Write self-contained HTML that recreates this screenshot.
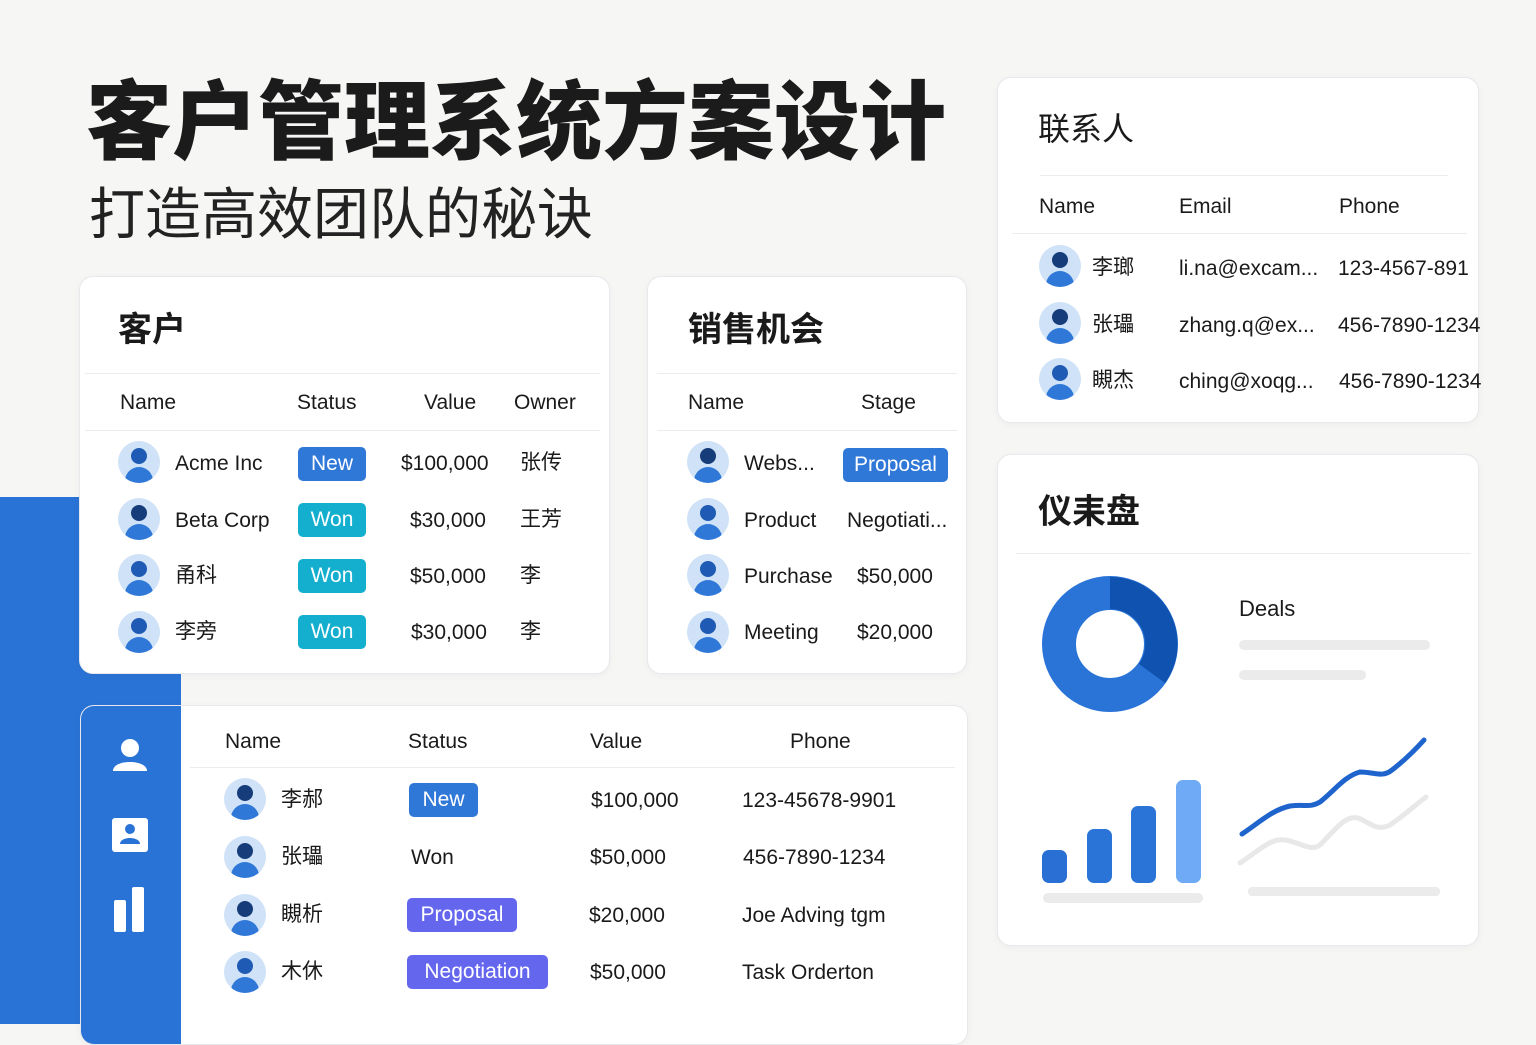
<!DOCTYPE html>
<html><head><meta charset="utf-8"><style>
*{margin:0;padding:0;box-sizing:border-box}
body{width:1536px;height:1024px;background:#f6f6f5;position:relative;overflow:hidden;font-family:"Liberation Sans","Noto Sans CJK SC",sans-serif;color:#1a1a1a}
.a{position:absolute;white-space:nowrap}
.card{position:absolute;background:#fff;border:1px solid #e6e8ec;border-radius:14px;box-shadow:0 2px 8px rgba(0,0,0,.04)}
.hl{position:absolute;height:1px;background:#ececec}
.t{font-size:21px}
.cj{transform:translateY(-6px)}
.h{font-size:34px;font-weight:bold;transform:translateY(-6px)}
.b{position:absolute;color:#fff;font-size:21px;border-radius:5px;text-align:center;line-height:34px;height:34px}
.new{background:#2f78d8}.won{background:#14aece}.pur{background:#6566ee}
.av{position:absolute;width:42px;height:42px;border-radius:50%;background:#cfe2f8;overflow:hidden}
.av:before{content:"";position:absolute;left:13px;top:7px;width:16px;height:16px;border-radius:50%;background:#1f5bb5}
.av:after{content:"";position:absolute;left:7px;top:26px;width:28px;height:18px;border-radius:14px 14px 0 0;background:#2f78d8}
.dk:before{background:#173c7a}
</style></head><body>
<div class="a" style="left:0;top:497px;width:181px;height:527px;background:#2a73d6"></div>

<div class="a" style="left:86px;top:52px;font-size:86px;font-weight:900;color:#1b1b1b">客户管理系统方案设计</div>
<div class="a" style="left:89px;top:170px;font-size:56px;color:#222">打造高效团队的秘诀</div>

<!-- customers -->
<div class="card" style="left:79px;top:276px;width:531px;height:398px"></div>
<div class="a h" style="left:118px;top:308px">客户</div>
<div class="hl" style="left:85px;top:373px;width:515px"></div>
<div class="a t" style="left:120px;top:391px">Name</div>
<div class="a t" style="left:297px;top:391px">Status</div>
<div class="a t" style="left:424px;top:391px">Value</div>
<div class="a t" style="left:514px;top:391px">Owner</div>
<div class="hl" style="left:85px;top:430px;width:515px"></div>
<div class="av" style="left:118px;top:441px"></div><div class="a t" style="left:175px;top:452px">Acme Inc</div><div class="b new" style="left:298px;top:447px;width:68px">New</div><div class="a t" style="left:401px;top:452px">$100,000</div><div class="a t cj" style="left:520px;top:452px">张传</div>
<div class="av dk" style="left:118px;top:498px"></div><div class="a t" style="left:175px;top:509px">Beta Corp</div><div class="b won" style="left:298px;top:503px;width:68px">Won</div><div class="a t" style="left:410px;top:509px">$30,000</div><div class="a t cj" style="left:520px;top:509px">王芳</div>
<div class="av" style="left:118px;top:554px"></div><div class="a t cj" style="left:175px;top:565px">甬科</div><div class="b won" style="left:298px;top:559px;width:68px">Won</div><div class="a t" style="left:410px;top:565px">$50,000</div><div class="a t cj" style="left:520px;top:565px">李</div>
<div class="av" style="left:118px;top:611px"></div><div class="a t cj" style="left:175px;top:621px">李旁</div><div class="b won" style="left:298px;top:615px;width:68px">Won</div><div class="a t" style="left:411px;top:621px">$30,000</div><div class="a t cj" style="left:520px;top:621px">李</div>

<!-- sales -->
<div class="card" style="left:647px;top:276px;width:320px;height:398px"></div>
<div class="a h" style="left:688px;top:308px">销售机会</div>
<div class="hl" style="left:657px;top:373px;width:300px"></div>
<div class="a t" style="left:688px;top:391px">Name</div>
<div class="a t" style="left:861px;top:391px">Stage</div>
<div class="hl" style="left:657px;top:430px;width:300px"></div>
<div class="av dk" style="left:687px;top:441px"></div><div class="a t" style="left:744px;top:452px">Webs...</div><div class="b new" style="left:843px;top:448px;width:105px">Proposal</div>
<div class="av" style="left:687px;top:498px"></div><div class="a t" style="left:744px;top:509px">Product</div><div class="a t" style="left:847px;top:509px">Negotiati...</div>
<div class="av" style="left:687px;top:554px"></div><div class="a t" style="left:744px;top:565px">Purchase</div><div class="a t" style="left:857px;top:565px">$50,000</div>
<div class="av" style="left:687px;top:611px"></div><div class="a t" style="left:744px;top:621px">Meeting</div><div class="a t" style="left:857px;top:621px">$20,000</div>

<!-- contacts -->
<div class="card" style="left:997px;top:77px;width:482px;height:346px"></div>
<div class="a" style="left:1038px;top:104px;font-size:32px">联系人</div>
<div class="hl" style="left:1040px;top:175px;width:408px"></div>
<div class="a t" style="left:1039px;top:195px">Name</div>
<div class="a t" style="left:1179px;top:195px">Email</div>
<div class="a t" style="left:1339px;top:195px">Phone</div>
<div class="hl" style="left:1012px;top:233px;width:455px"></div>
<div class="av dk" style="left:1039px;top:245px"></div><div class="a t cj" style="left:1092px;top:257px">李瑯</div><div class="a t" style="left:1179px;top:257px">li.na@excam...</div><div class="a t" style="left:1338px;top:257px">123-4567-891</div>
<div class="av dk" style="left:1039px;top:302px"></div><div class="a t cj" style="left:1092px;top:314px">张瓃</div><div class="a t" style="left:1179px;top:314px">zhang.q@ex...</div><div class="a t" style="left:1338px;top:314px">456-7890-1234</div>
<div class="av" style="left:1039px;top:358px"></div><div class="a t cj" style="left:1092px;top:370px">瞡杰</div><div class="a t" style="left:1179px;top:370px">ching@xoqg...</div><div class="a t" style="left:1339px;top:370px">456-7890-1234</div>

<!-- dashboard -->
<div class="card" style="left:997px;top:454px;width:482px;height:492px"></div>
<div class="a h" style="left:1038px;top:490px">仪耒盘</div>
<div class="hl" style="left:1016px;top:553px;width:455px"></div>
<div class="a t" style="left:1239px;top:596px;font-size:22px">Deals</div>
<div class="a" style="left:1239px;top:640px;width:191px;height:10px;border-radius:5px;background:#ebebeb"></div>
<div class="a" style="left:1239px;top:670px;width:127px;height:10px;border-radius:5px;background:#ebebeb"></div>
<svg class="a" style="left:0;top:0" width="1536" height="1024">
<circle cx="1110" cy="644" r="51" fill="none" stroke="#2a74d8" stroke-width="34"/>
<path d="M1110 577 A67 67 0 0 1 1165 683 L1139 664 A35 35 0 0 0 1110 609 Z" fill="#0f52b0"/>
<rect x="1042" y="850" width="25" height="33" rx="7" fill="#2a6fd4"/>
<rect x="1087" y="829" width="25" height="54" rx="7" fill="#2a74d8"/>
<rect x="1131" y="806" width="25" height="77" rx="7" fill="#2a74d8"/>
<rect x="1176" y="780" width="25" height="103" rx="7" fill="#6eaaf6"/>
<rect x="1043" y="893" width="160" height="10" rx="5" fill="#ebebeb"/>
<rect x="1248" y="887" width="192" height="9" rx="4" fill="#ebebeb"/>
<path d="M1240 863 C1260 850 1270 838 1285 840 C1300 842 1310 852 1320 845 C1335 830 1345 815 1358 818 C1370 822 1375 832 1390 825 C1405 815 1415 805 1426 797" fill="none" stroke="#e8e8e8" stroke-width="5" stroke-linecap="round"/>
<path d="M1242 834 C1260 822 1272 810 1290 806 C1305 804 1310 808 1320 802 C1335 790 1345 776 1360 772 C1375 772 1382 778 1392 770 C1405 760 1415 750 1424 740" fill="none" stroke="#1f63cc" stroke-width="5" stroke-linecap="round"/>
</svg>

<!-- bottom table -->
<div class="card" style="left:80px;top:705px;width:888px;height:340px;overflow:hidden"><div style="position:absolute;left:-1px;top:-1px;width:101px;height:345px;background:#2a73d6"></div></div>
<svg class="a" style="left:110px;top:735px" width="40" height="210">
<circle cx="20" cy="13" r="9" fill="#fff"/><path d="M3 36 C3 24 37 24 37 36 Z" fill="#fff"/>
<rect x="2" y="83" width="36" height="34" rx="3" fill="#fff"/><circle cx="20" cy="94" r="5" fill="#2a73d6"/><path d="M10 109 C10 101 30 101 30 109 Z" fill="#2a73d6"/>
<rect x="4" y="165" width="12" height="32" rx="2" fill="#fff"/><rect x="22" y="152" width="12" height="45" rx="2" fill="#fff"/>
</svg>
<div class="a t" style="left:225px;top:730px">Name</div>
<div class="a t" style="left:408px;top:730px">Status</div>
<div class="a t" style="left:590px;top:730px">Value</div>
<div class="a t" style="left:790px;top:730px">Phone</div>
<div class="hl" style="left:190px;top:767px;width:765px"></div>
<div class="av dk" style="left:224px;top:778px"></div><div class="a t cj" style="left:281px;top:789px">李郝</div><div class="b new" style="left:409px;top:783px;width:69px">New</div><div class="a t" style="left:591px;top:789px">$100,000</div><div class="a t" style="left:742px;top:789px">123-45678-9901</div>
<div class="av dk" style="left:224px;top:836px"></div><div class="a t cj" style="left:281px;top:846px">张瓃</div><div class="a t" style="left:411px;top:846px">Won</div><div class="a t" style="left:590px;top:846px">$50,000</div><div class="a t" style="left:743px;top:846px">456-7890-1234</div>
<div class="av dk" style="left:224px;top:894px"></div><div class="a t cj" style="left:281px;top:904px">瞡析</div><div class="b pur" style="left:407px;top:898px;width:110px">Proposal</div><div class="a t" style="left:589px;top:904px">$20,000</div><div class="a t" style="left:742px;top:904px">Joe Adving tgm</div>
<div class="av" style="left:224px;top:951px"></div><div class="a t cj" style="left:281px;top:961px">木休</div><div class="b pur" style="left:407px;top:955px;width:141px">Negotiation</div><div class="a t" style="left:590px;top:961px">$50,000</div><div class="a t" style="left:742px;top:961px">Task Orderton</div>
</body></html>
